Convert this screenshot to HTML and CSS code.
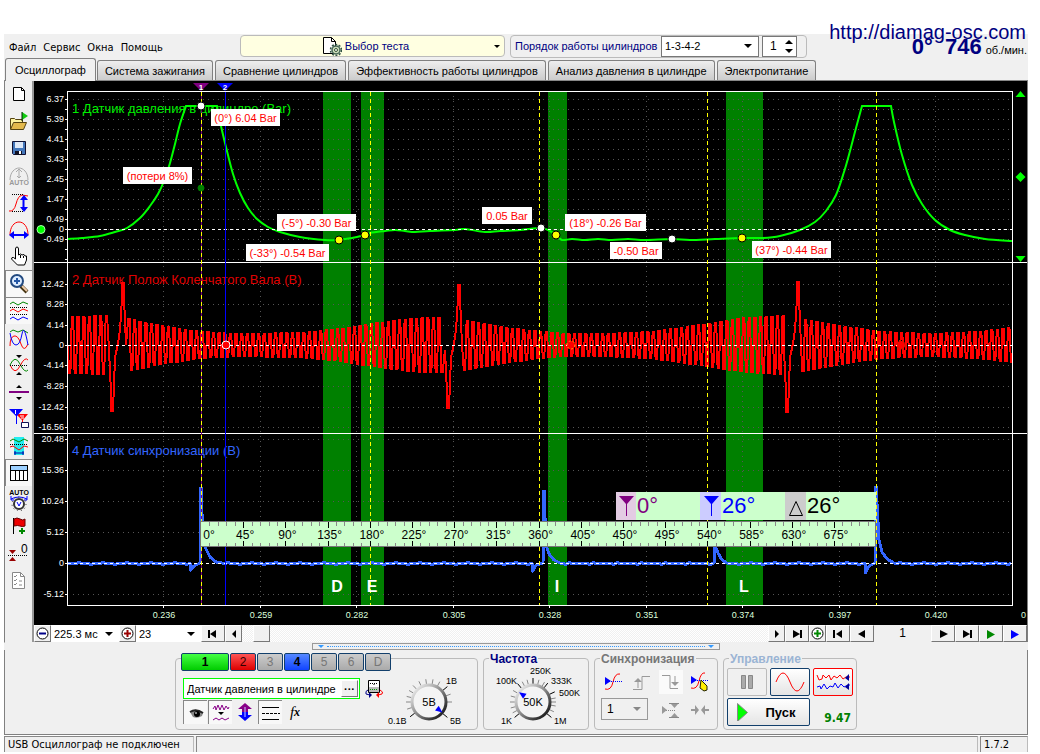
FILE: index.html
```html
<!DOCTYPE html>
<html lang="ru">
<head>
<meta charset="utf-8">
<title>USB Осциллограф</title>
<link rel="stylesheet" href="styles.css">
</head>
<body>
<div class="app">
  <header class="top">
    <nav class="menu">
      <button>Файл</button><button>Сервис</button><button>Окна</button><button>Помощь</button>
    </nav>
    <button class="test-pick">
      <svg width="20" height="20" viewBox="0 0 20 20"><path d="M1.500 1.500h8l4 4v12h-12z" fill="#fff" stroke="#000"/><path d="M9.500 1.500v4h4" fill="none" stroke="#000"/><circle cx="14" cy="14" r="4" fill="#cdb" stroke="#465" stroke-width="1.500"/><circle cx="14" cy="14" r="5.500" fill="none" stroke="#354" stroke-width="1.500" stroke-dasharray="2 1.500"/><circle cx="14" cy="14" r="1.500" fill="#fff" stroke="#353"/></svg>
      <span>Выбор теста</span><i class="caret"></i>
    </button>
    <div class="order">
      <label for="order">Порядок работы цилиндров</label>
      <span class="pick"><select id="order"><option>1-3-4-2</option></select><i class="caret big"></i></span>
      <span class="spin"><input aria-label="Цилиндр" value="1"><svg width="10" height="15" viewBox="0 0 10 15"><path d="M5 1l4 4H1zM5 14l4-4H1z"/></svg></span>
    </div>
    <div class="readout">
      <a class="site" href="#">http://diamag-osc.com</a>
      <div class="rpm"><b>0°</b><b>746</b><span>об./мин.</span></div>
    </div>
  </header>

  <div class="tabs" role="tablist">
    <button role="tab" class="tab on">Осциллограф</button>
    <button role="tab" class="tab">Система зажигания</button>
    <button role="tab" class="tab">Сравнение цилиндров</button>
    <button role="tab" class="tab">Эффективность работы цилиндров</button>
    <button role="tab" class="tab">Анализ давления в цилиндре</button>
    <button role="tab" class="tab">Электропитание</button>
  </div>

  <main class="work">
    <aside class="tools">
      <button aria-label="Новый"><svg viewBox="0 0 22 22"><path d="M5.500 3.500h8l3 3v10h-11z" fill="#fff" stroke="#000"/><path d="M13.500 3.500v3h3" fill="none" stroke="#000"/></svg></button>
      <button aria-label="Открыть"><svg viewBox="0 0 22 22"><path d="M2.500 18V7.500h4l1 1h7v3" fill="#fdf3a0" stroke="#541"/><path d="M2.500 18.500l3-7h13l-3 7z" fill="#e3b94d" stroke="#541"/><path d="M14 1l6 4-6 4z" fill="#1c1"/><path d="M14 1v9" stroke="#020"/></svg></button>
      <button aria-label="Сохранить"><svg viewBox="0 0 22 22"><path d="M4.500 3.500h13v13h-12l-1-1z" fill="#47b" stroke="#113"/><path d="M7 4h8v6H7z" fill="#dde8f8"/><path d="M7 13h7v4H7z" fill="#112"/><path d="M11 13h2v3h-2z" fill="#fff"/></svg></button>
      <button aria-label="Авто"><svg viewBox="0 0 22 22"><path d="M2 15c0-8 5-12 9-12s9 4 9 12M11 5v8M8 7l3-3 3 3M9 11l2 2 2-2" fill="none" stroke="#aaa"/><text x="11" y="20" class="t-auto" fill="#999">AUTO</text></svg></button>
      <button aria-label="Масштаб по амплитуде"><svg viewBox="0 0 22 22"><path d="M1 19q5 1 7-7t6-9l6 1" fill="none" stroke="#f00"/><path d="M4 2.500h12M4 19.500h12" stroke="#000" stroke-dasharray="1 1"/><path d="M15.500 5v13" stroke="#00f" stroke-width="2"/><path d="M12 8l4-5 4 5zM12 15l4 5 4-5z" fill="#00f"/></svg></button>
      <button aria-label="Масштаб по времени"><svg viewBox="0 0 22 22"><path d="M2 16c0-8 4-13 9-13s9 5 9 13" fill="none" stroke="#f00"/><path d="M3 16h16" stroke="#00f" stroke-width="2"/><path d="M1 16l5-4v8zM21 16l-5-4v8z" fill="#00f"/></svg></button>
      <button aria-label="Рука"><svg viewBox="0 0 22 22"><path d="M7.500 13V3q0-2 1.500-2t1.500 2v6l2-1 1.500 1 2-.5 1 1.500 1.500 0V14l-2 5h-7l-6-6q0-2 2-1.500z" fill="#fff" stroke="#000"/><path d="M12.500 9v3M15.500 10v2" stroke="#000"/></svg></button>
      <button class="on" aria-label="Лупа"><svg viewBox="0 0 22 22"><path d="M13 13l6 6" stroke="#431" stroke-width="4"/><path d="M14 13l5 5" stroke="#eca" stroke-width="2"/><circle cx="9" cy="8" r="6" fill="#dcecff" stroke="#234a80" stroke-width="2"/><path d="M9 5v6M6 8h6" stroke="#2457a5" stroke-width="2"/></svg></button>
      <button class="on" aria-label="Раздельно"><svg viewBox="0 0 22 22"><g fill="none"><path d="M2 4l3-2 5 3 5-3 5 2" stroke="#080"/><path d="M2 11l3-2 5 3 5-3 5 2" stroke="#f00"/><path d="M2 19l3-2 5 3 5-3 5 2" stroke="#00f"/><path d="M2 7.500h18M2 14.500h18" stroke="#000" stroke-dasharray="1 1"/></g></svg></button>
      <button aria-label="Вместе"><svg viewBox="0 0 22 22"><g fill="none"><path d="M2 5l3-2 5 2 5-2 5 3" stroke="#080"/><path d="M2 19q0-9 4-10t7 8 7 0" stroke="#f00"/><path d="M2 6q2 12 6 12t6-11 6 11" stroke="#00f"/></g></svg></button>
      <button aria-label="Центр"><svg viewBox="0 0 22 22"><g fill="none"><path d="M2 11q5-11 10-1t8 6" stroke="#080"/><path d="M2 11q5 11 10 1t8-6" stroke="#f00"/><path d="M2 11.500h18" stroke="#000" stroke-dasharray="1 1"/></g><path d="M8 1h6l-3 3zM8 21h6l-3-3z"/></svg></button>
      <button aria-label="Линия"><svg viewBox="0 0 22 22"><path d="M1 11h20" stroke="#800080" stroke-width="2"/><path d="M8 7h6l-3-3zM8 16h6l-3 3z"/></svg></button>
      <button aria-label="Маркеры"><svg viewBox="0 0 22 22"><path d="M8 6h12l-5 6v6h-1v-6z" fill="#f00"/><path d="M1 1h14L9 8v8H8V8z" fill="#00f"/><path d="M7.500 2v4M12 8h4M13 10h3" stroke="#fff"/><path d="M13.500 14.500h7v5h-7z" fill="#fff" stroke="#115"/></svg></button>
      <button aria-label="Интервал"><svg viewBox="0 0 22 22"><path d="M6 2h10v18H6z" fill="#2ee"/><g fill="none"><path d="M2 6l3-2 6 3 5-3 4 2" stroke="#080"/><path d="M2 12l3-1 6 4 5-4 4 1" stroke="#f00"/><path d="M2 9.500h18" stroke="#000" stroke-dasharray="1 1"/><path d="M6 18h10M7 16v4M15 16v4" stroke="#00a"/></g></svg></button>
      <button class="on" aria-label="Таблица"><svg viewBox="0 0 22 22"><path d="M2 4h18v4H2z" fill="#9cd0ff"/><path d="M2 8h18v10H2z" fill="#fff"/><path d="M2.500 4v14M7.500 8v10M11.500 8v10M15.500 8v10M19.500 4v14M2 3.500h18M2 8.500h18M2 18.500h18" stroke="#000"/></svg></button>
      <button aria-label="Авто напряжение"><svg viewBox="0 0 22 22"><text x="11" y="6" class="t-auto">AUTO</text><path d="M3 10q8-4 16 0M3 7v4h3M19 7v4h-3" fill="none" stroke="#00f"/><circle cx="11" cy="15" r="5" fill="#fff" stroke="#333" stroke-width="2"/><circle cx="11" cy="15" r="7" fill="none" stroke="#333" stroke-dasharray="1 3"/><path d="M9 13l2 4 2-4" fill="none" stroke="#00f"/></svg></button>
      <button aria-label="Флаг"><svg viewBox="0 0 22 22"><path d="M5.500 2v16" stroke="#000"/><path d="M6 3q3-2 6 0t5 0v7q-3 1-5 0t-6 0z" fill="#e00" stroke="#600"/><path d="M14 12v6M11 15h6" stroke="#080" stroke-width="2"/></svg></button>
      <button aria-label="Ноль"><svg viewBox="0 0 22 22"><path d="M1 7h7l-3.500 4zM1 18h7l-3.500-4z" fill="#900"/><path d="M0 12.500h20" stroke="#000" stroke-dasharray="1 1"/><text x="13" y="10" class="t-zero">0</text></svg></button>
      <button aria-label="Список"><svg viewBox="0 0 22 22"><path d="M4.500 2.500h8l4 4v12h-12z" fill="#fff" stroke="#888"/><path d="M12.500 2.500v4h4M6 6l1 1 2-2M6 10l1 1 2-2M6 14l1 1 2-2M11 11h3M11 15h3" fill="none" stroke="#888"/></svg></button>
    </aside>

    <section class="scope">
      <svg id="screen" class="screen" viewBox="34 81 993 544">
        <rect x="34" y="81" width="993" height="544"/>
        <g id="bands" fill="#008000"></g>
        <g id="grid" class="grid"></g>
        <g class="name">
          <text x="72" y="113" fill="#00f000">1 Датчик давления в цилиндре (Bar)</text>
          <text x="72" y="284" fill="#e00000">2 Датчик Полож Коленчатого Вала (В)</text>
          <text x="72" y="455" fill="#3366ff">4 Датчик синхронизации (В)</text>
        </g>
        <path id="pressure" fill="none" stroke="#00ff00" stroke-width="2"/>
        <path id="crank" fill="none" stroke="#ff0000" stroke-width="2" shape-rendering="crispEdges"/>
        <path id="sync" fill="none" stroke="#3366ff" stroke-width="3" stroke-linejoin="bevel" shape-rendering="crispEdges"/>
        <g id="lines"></g>
        <g id="axis" class="axis"></g>
        <g id="marks"></g>
        <g id="callouts" class="callout"></g>
        <g id="ruler"></g>
      </svg>
      <div class="timebar">
        <button class="sq" aria-label="Уменьшить"><svg width="13" height="13" viewBox="0 0 13 13"><circle cx="6.500" cy="6.500" r="5.500" fill="#fff" stroke="#000"/><path d="M3 6.500h7" stroke="#008" stroke-width="2"/></svg></button>
        <span class="pick flat"><select aria-label="Длительность"><option>225.3 мс</option></select><i class="caret big"></i></span>
        <button class="sq" aria-label="Увеличить"><svg width="13" height="13" viewBox="0 0 13 13"><circle cx="6.500" cy="6.500" r="5.500" fill="#fff" stroke="#000"/><path d="M3 6.500h7M6.500 3v7" stroke="#900" stroke-width="2"/></svg></button>
        <span class="pick flat wide"><select aria-label="Деление"><option>23</option></select><i class="caret big"></i></span>
        <button class="nav" aria-label="В начало"><svg viewBox="0 0 14 10"><path d="M2 1h2v8H2zM10 1v8L4 5z"/></svg></button>
        <button class="sq" aria-label="Влево"><svg viewBox="0 0 14 10"><path d="M9 1v8L5 5z"/></svg></button>
        <div class="track"><button class="thumb" aria-label="Прокрутка"></button></div>
        <button class="sq" aria-label="Вправо"><svg viewBox="0 0 14 10"><path d="M5 1v8l4-4z"/></svg></button>
        <button class="nav" aria-label="В конец"><svg viewBox="0 0 14 10"><path d="M10 1h2v8h-2zM3 1v8l7-4z"/></svg></button>
        <button class="sq" aria-label="Добавить"><svg width="13" height="13" viewBox="0 0 13 13"><circle cx="6.500" cy="6.500" r="5.500" fill="#fff" stroke="#000"/><path d="M3 6.500h7M6.500 3v7" stroke="#080" stroke-width="2"/></svg></button>
        <button class="nav" aria-label="Первый"><svg viewBox="0 0 14 10"><path d="M2 1h2v8H2zM11 1v8L5 5z"/></svg></button>
        <button class="nav" aria-label="Предыдущий"><svg viewBox="0 0 14 10"><path d="M10 1v8L3 5z"/></svg></button>
        <output class="page">1</output>
        <button class="nav" aria-label="Следующий"><svg viewBox="0 0 14 10"><path d="M4 1v8l8-4z"/></svg></button>
        <button class="nav" aria-label="Последний"><svg viewBox="0 0 14 10"><path d="M10 1h2v8h-2zM3 1v8l7-4z"/></svg></button>
        <button class="nav" aria-label="Воспроизвести"><svg viewBox="0 0 14 10"><path d="M3 1v9l8-4.500z" fill="#080"/></svg></button>
        <button class="nav" aria-label="Воспроизвести всё"><svg viewBox="0 0 14 10"><path d="M3 1v9l8-4.500z" fill="#00f"/></svg></button>
      </div>
    </section>
  </main>

  <div class="splitter"><i></i><span></span><i></i></div>

  <div class="panels">
    <section class="group channels">
      <div class="chan-left">
        <div class="chan-row">
          <button class="ch c1">1</button><button class="ch c2">2</button><button class="ch">3</button><button class="ch c4">4</button><button class="ch">5</button><button class="ch">6</button><button class="ch">D</button>
        </div>
        <div class="sensor-row">
          <div class="sensor"><input aria-label="Датчик" value="Датчик давления в цилиндре"><button aria-label="Выбрать датчик">···</button></div>
          <button class="bare" aria-label="Прибор"><svg width="20" height="20" viewBox="0 0 20 20"><path d="M4.500 1.500h11v12h-11z" fill="#fff" stroke="#000"/><path d="M5 8h10v5H5z" fill="#bbb"/><path d="M6 10.500h8" stroke="#090" stroke-dasharray="1 1"/><path d="M6 4.500h8M10 5v2" stroke="#000" stroke-dasharray="1 1"/><path d="M4 11q-3 1-2 4l4 1" fill="none" stroke="#008"/><path d="M5 13v6l3-3z" fill="#008"/><path d="M16 11q4 2 2 4l-4 1" fill="none" stroke="#f00"/><path d="M15 13v6l-3-3z" fill="#f00"/></svg></button>
        </div>
        <div class="mini-row">
          <button class="mini on" aria-label="Показать"><svg width="20" height="20" viewBox="0 0 20 20"><path d="M4 9q6-5 13 1l-1 3q-5 3-9 1z" fill="#888"/><path d="M4 9q6-4 13 1" stroke="#222" stroke-width="2" fill="none"/><circle cx="11" cy="11" r="3"/><path d="M9 10h2" stroke="#fff"/></svg></button>
          <button class="mini on" aria-label="Фильтр"><svg width="20" height="20" viewBox="0 0 20 20"><path d="M2 6l2-3 1 4 2-5 2 5 2-5 2 5 2-4 2 3 1-2M2 17l3-2 3 2 3-2 3 2 4-2" fill="none" stroke="#808"/><path d="M7 9h6l-3 3z"/></svg></button>
          <button class="mini" aria-label="Сдвиг"><svg width="20" height="20" viewBox="0 0 20 20"><path d="M10 1l7 6h-4v3H7V7H3z" fill="#808"/><path d="M10 19l7-6h-4v-3H7v3H3z" fill="#00f"/><path d="M10 5v10" stroke="#ccf"/></svg></button>
          <button class="mini on" aria-label="Линии"><svg width="20" height="20" viewBox="0 0 20 20"><path d="M1 4.500h17M1 16.500h17" stroke="#000"/><path d="M1 10.500h18" stroke="#000" stroke-dasharray="3 1"/></svg></button>
          <button class="mini fx" aria-label="Функция"><i>f</i><b>x</b></button>
        </div>
      </div>
      <svg class="knob" id="knobV" width="92" height="66" viewBox="382 668 92 66"></svg>
    </section>

    <section class="group freq"><h2>Частота</h2>
      <svg class="knob" id="knobF" width="96" height="66" viewBox="488 664 96 66"></svg>
    </section>

    <section class="group sync"><h2>Синхронизация</h2>
      <div class="sync-grid">
        <button class="bare" aria-label="Уровень"><svg width="20" height="20" viewBox="0 0 20 20"><path d="M2 17q6 2 8-7t7-8" fill="none" stroke="#f00"/><path d="M2 9.500h17" stroke="#00f" stroke-dasharray="1 1"/><path d="M2 5l6 4-6 4z" fill="#00f"/></svg></button>
        <button class="bare" aria-label="Фронт"><svg width="20" height="20" viewBox="0 0 20 20"><path d="M1 17.500h9v-13h8M6 16V9" fill="none" stroke="#999"/><path d="M2 10h8L6 6z" fill="#999"/></svg></button>
        <button class="bare hatch" aria-label="Спад"><svg width="20" height="20" viewBox="0 0 20 20"><path d="M1 3.500h8v13h8M14 4v7" fill="none" stroke="#999"/><path d="M10 10h8l-4 4z" fill="#999"/></svg></button>
        <button class="bare" aria-label="Вручную"><svg width="20" height="20" viewBox="0 0 20 20"><path d="M1 16q6 2 8-7t6-8" fill="none" stroke="#f00"/><path d="M1 8.500h18" stroke="#00f" stroke-dasharray="1 1"/><path d="M1 4l6 4-6 4z" fill="#00f"/><path d="M11 8l6 6v4l-3 1-4-3z" fill="#fe0" stroke="#220"/></svg></button>
        <span class="pick gray"><select aria-label="Канал синхронизации"><option>1</option></select><i class="caret big"></i></span>
        <button class="bare" aria-label="Диапазон"><svg width="20" height="20" viewBox="0 0 20 20"><path d="M8 3.500h10M8 17.500h10" stroke="#888"/><path d="M1 10.500h14" stroke="#888" stroke-dasharray="1 1"/><path d="M10 4h7l-3.500 4zM10 17h7l-3.500-4zM1 6l5 4-5 4z" fill="#999"/></svg></button>
        <button class="bare" aria-label="Свести"><svg width="20" height="20" viewBox="0 0 20 20"><path d="M1 9h4V5l4 5-4 5v-4H1zM19 9h-4V5l-4 5 4 5v-4h4z" fill="#999"/></svg></button>
      </div>
    </section>

    <section class="group control"><h2>Управление</h2>
      <div class="run-grid">
        <button class="run dis" aria-label="Пауза"><svg width="30" height="20" viewBox="0 0 30 20"><path d="M9.500 3.500h4v13h-4zM16.500 3.500h4v13h-4z" fill="#aaa" stroke="#888"/></svg></button>
        <button class="run" aria-label="Синус"><svg width="30" height="20" viewBox="0 0 30 20"><path d="M1 10Q8-8 15 10t14 0" fill="none" stroke="#f00"/></svg></button>
        <button class="run red" aria-label="Запись"><svg width="34" height="20" viewBox="0 0 34 20"><path d="M1 3l2 5 3-1 1-4 3 3 3-3 2 5 3-4 3 2 3-3 3 4 3-2h4" fill="none" stroke="#f00"/><path d="M1 15l3-1 1 3 3-5 3 5 3-3 3 1 2-4 3 5 3-4 3 3 4-2h2" fill="none" stroke="#00f"/><path d="M33 2v7l-4-3zM33 11v7l-4-3z" fill="#009"/></svg></button>
        <button class="run start"><svg width="14" height="18" viewBox="0 0 14 18"><path d="M1.500.5l10 9-10 9z" fill="#0f0" stroke="#888"/></svg><span>Пуск</span></button>
        <output>9.47</output>
      </div>
    </section>
  </div>

  <footer class="status"><span>USB Осциллограф не подключен</span><span></span><span>1.7.2</span></footer>
</div>
<script src="app.js"></script>
</body>
</html>
```

FILE: app.js
```js
const NS = 'http://www.w3.org/2000/svg';
const $ = id => document.getElementById(id);
function add(parent, tag, attrs, text) {
  const el = document.createElementNS(NS, tag);
  for (const k in attrs) el.setAttribute(k, attrs[k]);
  if (text !== undefined) el.textContent = text;
  parent.appendChild(el);
  return el;
}
const line = (p, d, cls) => add(p, 'path', { d, class: cls });

/* stroke phases */
[[323, 28], [361, 23], [548, 19], [726, 37]].forEach(([x, w]) =>
  add($('bands'), 'rect', { x, y: 92, width: w, height: 513 }));

/* grid */
const rows1 = []; for (let y = 99; y < 260; y += 10) rows1.push(y);
const rows2 = [284, 304, 325, 365, 386, 407, 427];
const rows3 = [439, 470, 501, 532, 594];
const cols = [163, 260, 356, 453, 549, 646, 742, 839, 935];
[...rows1, ...rows2, ...rows3].forEach(y => line($('grid'), `M73 ${y}.5H1011`));
cols.forEach(x => line($('grid'), `M${x}.5 96V604`));

/* smooth curve through points */
function curve(p) {
  let d = `M${p[0]}`;
  for (let i = 0; i < p.length - 1; i++) {
    const a = p[i - 1] || p[i], b = p[i], c = p[i + 1], e = p[i + 2] || c;
    d += `C${b[0] + (c[0] - a[0]) / 6} ${b[1] + (c[1] - a[1]) / 6} ${c[0] - (e[0] - b[0]) / 6} ${c[1] - (e[1] - b[1]) / 6} ${c[0]} ${c[1]}`;
  }
  return d;
}
const up1 = [[68, 239], [82, 238], [100, 236], [115, 232], [127, 228], [140, 218], [150, 206], [158, 194], [164, 181], [170, 163], [175, 144], [180, 124], [186, 106]];
const mid = [[217, 106], [221, 126], [226, 147], [233, 174], [240, 193], [248, 208], [257, 219], [268, 227], [280, 232], [300, 237], [325, 240], [339, 240], [352, 238], [361, 236], [370, 233], [385, 231], [395, 230], [405, 231], [415, 232], [430, 231], [455, 230], [465, 229], [485, 232], [500, 231], [520, 230], [541, 228], [550, 231], [556, 235], [562, 240], [572, 239], [585, 240], [598, 239], [612, 240], [628, 239], [645, 240], [672, 239], [690, 240], [715, 239], [742, 238], [763, 238], [780, 236], [800, 230], [815, 222], [826, 211], [836, 195], [844, 172], [850, 151], [856, 128], [862, 106]];
const end = [[891, 106], [894, 122], [902, 155], [912, 185], [922, 204], [935, 220], [950, 230], [965, 235], [985, 239], [1012, 241]];
$('pressure').setAttribute('d', curve(up1) + curve(mid).replace('M', 'L') + curve(end).replace('M', 'L'));

/* crankshaft sensor: carrier with an amplitude envelope and missing-tooth pulses */
const env = [[68, 29], [108, 30], [128, 27], [160, 20], [200, 14], [235, 12], [300, 13], [340, 17], [385, 24], [420, 28], [445, 28], [464, 26], [500, 19], [540, 14], [565, 12], [600, 12], [650, 14], [700, 21], [745, 28], [783, 30], [802, 27], [840, 20], [880, 14], [930, 12], [975, 14], [1012, 18]];
function amp(x) {
  for (let i = 1; i < env.length; i++) if (x <= env[i][0]) {
    const [a, b] = env[i - 1], [c, d] = env[i];
    return b + (d - b) * (x - a) / (c - a);
  }
  return 16;
}
const pulses = [[112, 411, 283], [448, 408, 285], [787, 412, 282]];
let d = 'M68 345';
for (let x = 69, s = 1; x < 1011; x += 2.82, s = -s) {
  if (pulses.some(p => x > p[0] - 4 && x < p[0] + 15)) continue;
  const y = 345 + s * (amp(x) - 1);
  d += `L${x.toFixed(1)} ${y.toFixed(1)}h1.4`;
  const p = pulses.find(q => x <= q[0] - 4 && x + 2.82 > q[0] - 4);
  if (p) d += `L${p[0] - 3} 350L${p[0] - 1} 392V${p[1]}H${p[0] + 1}L${p[0] + 3} 358L${p[0] + 6} 343L${p[0] + 8} 330L${p[0] + 10} 298V${p[2]}H${p[0] + 12}V298L${p[0] + 14} 345`;
}
$('crank').setAttribute('d', d);

/* synchronisation sensor */
const hits = [
  { x0: 188, pts: [[190, 563], [190, 571], [194, 566], [200, 563], [201, 487], [203, 540], [206, 549], [210, 557], [216, 562], [222, 563]] },
  { x0: 530, pts: [[532, 563], [532, 572], [536, 565], [543, 563], [544, 490], [546, 545], [549, 554], [554, 560], [560, 563]] },
  { x0: 712, pts: [[714, 563], [715, 546], [718, 553], [722, 560], [727, 563]] },
  { x0: 862, pts: [[865, 563], [865, 574], [869, 566], [875, 563], [876, 486], [879, 540], [882, 552], [887, 559], [894, 563]] }
];
d = 'M68 563.5';
let h = 0;
for (let x = 70; x < 1012; x += 3) {
  if (hits[h] && x >= hits[h].x0) {
    hits[h].pts.forEach(p => { d += `L${p}`; });
    x = hits[h].pts[hits[h].pts.length - 1][0];
    h++;
    continue;
  }
  const n = (x * 7 + (x >> 3)) % 9;
  d += `L${x} ${563.5 + (n === 0 ? 1 : n === 4 ? -1 : 0)}`;
}
$('sync').setAttribute('d', d);

/* frame, zero lines, cursors */
const L = $('lines');
line(L, 'M67.500 91.500H1012.500V605.500H67.500zM34 262.500H1027M34 433.500H1027', 'frame');
[229, 345, 563].forEach(y => line(L, `M68 ${y}.5H1012`, 'zero'));
line(L, 'M201.500 92V605', 'cur1');
[201, 370, 539, 707, 876].forEach(x => line(L, `M${x}.5 92V605`, 'cycle'));
line(L, 'M225.500 92V605', 'cur2');

/* scales */
const A = $('axis');
const scale = (items, ticks) => {
  items.forEach(([y, t]) => add(A, 'text', { x: 64, y: y + 3, 'text-anchor': 'end' }, t));
  ticks.forEach(y => line(A, `M65 ${y}.5H68`, 'frame'));
};
scale([[99, '6.37'], [119, '5.39'], [139, '4.41'], [159, '3.43'], [179, '2.45'], [199, '1.47'], [219, '0.49'], [229, '0'], [239, '-0.49']], rows1);
scale([[284, '12.42'], [304, '8.28'], [325, '4.14'], [345, '0'], [365, '-4.14'], [386, '-8.28'], [407, '-12.42'], [427, '-16.56']], [...rows2, 345]);
scale([[439, '20.48'], [470, '15.36'], [501, '10.24'], [532, '5.12'], [563, '0'], [594, '-5.12']], [...rows3, 563]);
['0.236', '0.259', '0.282', '0.305', '0.328', '0.351', '0.374', '0.397', '0.420'].forEach((t, i) => {
  add(A, 'text', { x: cols[i] + 1, y: 618, 'text-anchor': 'middle', class: 'time' }, t);
  line(A, `M${cols[i]}.5 606v2`, 'frame');
});
add(A, 'text', { x: 1021, y: 618, class: 'time' }, '0');

/* markers */
const M = $('marks');
const dot = (cx, cy, fill, stroke = '#000', r = 4) => add(M, 'circle', { cx, cy, r, fill, stroke });
dot(41, 229.5, '#00ff00', '#afa');
dot(201, 188, '#008000', '#008000', 3);
dot(201, 106, '#fff'); dot(541, 228, '#fff'); dot(672, 239, '#fff');
[[339, 240], [365, 235], [556, 235], [742, 238]].forEach(p => dot(p[0], p[1], '#ffff00'));
dot(226, 345, '#f00', '#fff');
dot(571, 345, '#f00', '#fa0').setAttribute('stroke-dasharray', '2 2');
dot(901, 345, '#f00', '#a30').setAttribute('stroke-dasharray', '2 2');
add(M, 'path', { d: 'M1020.500 91l5 6h-10zM1020.500 172l5 5-5 5-5-5zM1020.500 262l5-6h-10z', fill: '#00ff00' });
add(M, 'path', { d: 'M193 83h16l-8 8z', fill: '#800080' });
add(M, 'path', { d: 'M217 83h16l-8 8z', fill: '#0000ff' });
add(M, 'text', { x: 201, y: 90, class: 'flag' }, '1');
add(M, 'text', { x: 225, y: 90, class: 'flag' }, '2');
[[337, 'D'], [372, 'E'], [557, 'I'], [744, 'L']].forEach(([x, t]) => add(M, 'text', { x, y: 592, class: 'phase' }, t));

/* call-outs */
[[211, 109, 69, '(0°) 6.04 Bar'], [123, 167, 69, '(потери 8%)'], [277, 214, 79, '(-5°) -0.30 Bar'], [246, 244, 83, '(-33°) -0.54 Bar'],
 [482, 207, 50, '0.05 Bar'], [565, 214, 81, '(18°) -0.26 Bar'], [610, 242, 52, '-0.50 Bar'], [752, 241, 79, '(37°) -0.44 Bar']].forEach(([x, y, w, t]) => {
  add($('callouts'), 'rect', { x, y, width: w, height: 17 });
  add($('callouts'), 'text', { x: x + w / 2, y: y + 13 }, t);
});

/* angle ruler */
const R = $('ruler');
add(R, 'rect', { x: 200.5, y: 521.5, width: 675, height: 25, class: 'tape' });
for (let i = 1; i < 80; i++) {
  const x = Math.round(201 + i * 8.44), big = i % 5 === 0, n = big ? 6 : 4;
  line(R, `M${x}.5 522v${n}M${x}.5 546v-${n - 1}`, big ? 'big' : 'small');
}
for (let i = 0; i < 16; i++) {
  add(R, 'text', { x: i ? 203 + i * 42.2 : 209, y: 539, class: 'deg' }, i * 45 + '°');
}
add(R, 'rect', { x: 616, y: 492, width: 260, height: 28, fill: '#ccffcc' });
[[616, 20, '#e3cce3'], [700, 21, '#ccccff'], [785, 21, '#cccccc']].forEach(([x, w, f]) => add(R, 'rect', { x, y: 492, width: w, height: 28, fill: f }));
add(R, 'path', { d: 'M619 496h15l-7 8v12h-1v-12z', fill: '#800080' });
add(R, 'path', { d: 'M704 496h15l-7 8v12h-1v-12z', fill: '#0000ff' });
add(R, 'path', { d: 'M789.500 515.500h13l-6.500-14z', fill: 'none', stroke: '#000' });
[[637, '0°', '#800080'], [722, '26°', '#0000ff'], [807, '26°', '#000']].forEach(([x, t, fill]) => add(R, 'text', { x, y: 513, class: 'angle', fill }, t));

/* rotary knobs */
function knob(svg, cx, cy, value, minor, major, pointer) {
  const defs = add(svg, 'defs', {});
  const g = add(defs, 'linearGradient', { id: svg.id + 'g', x1: 0, y1: 0, x2: 1, y2: 1 });
  add(g, 'stop', { offset: 0, 'stop-color': '#fff' });
  add(g, 'stop', { offset: 0.5, 'stop-color': '#888' });
  add(g, 'stop', { offset: 1, 'stop-color': '#000' });
  const ray = (a, r1, r2, stroke) => {
    const c = Math.cos(a * Math.PI / 180), s = -Math.sin(a * Math.PI / 180);
    add(svg, 'path', { d: `M${cx + c * r1} ${cy + s * r1}L${cx + c * r2} ${cy + s * r2}`, stroke });
  };
  minor.forEach(a => ray(a, 18, 23, '#888'));
  major.forEach(a => ray(a, 18, 24, '#000'));
  add(svg, 'circle', { cx, cy, r: 17, fill: '#f4f4f4', stroke: `url(#${svg.id}g)`, 'stroke-width': 3 });
  add(svg, 'text', { x: cx, y: cy + 4, class: 'kval' }, value);
  add(svg, 'path', { d: 'M-3 -3L4 0L-3 3z', fill: '#00f', transform: `translate(${cx + 13 * Math.cos(pointer * Math.PI / 180)} ${cy - 13 * Math.sin(pointer * Math.PI / 180)}) rotate(${-pointer})` });
}
knob($('knobV'), 430, 702, '5В', [0, 20, 62, 80, 98, 116, 134, 150, 166, 180, 198], [40, -40, 218], -38);
[[447, 684, '1В'], [451, 724, '5В'], [389, 724, '0.1В']].forEach(([x, y, t]) => add($('knobV'), 'text', { x, y, class: 'klab' }, t));
knob($('knobF'), 533, 702, '50K', [0, 10, -10, -25, 60, 75, 105, 118, 150, 165, 180, 195, 208], [90, 52, 25, 130, -40, 220], 145);
[[496, 684, '100K'], [530, 674, '250K'], [551, 684, '333K'], [559, 696, '500K'], [501, 724, '1K'], [554, 724, '1M']].forEach(([x, y, t]) => add($('knobF'), 'text', { x, y, class: 'klab' }, t));
```

FILE: styles.css
```css
* { box-sizing: border-box; }
body { margin: 0; background: #fff; font: 11px "Liberation Sans", Arial, sans-serif; color: #000; }
button, input, select { font: inherit; color: inherit; margin: 0; padding: 0; border: 0; background: none; border-radius: 0; }
h2 { margin: 0; }
.app { margin: 34px 12px 0 4px; background: #f0f0f0; }

.top { display: flex; height: 24px; align-items: center; }
.menu { display: flex; gap: 7px; padding: 2px 0 0 5px; width: 236px; font: 11px "DejaVu Sans Condensed", "DejaVu Sans", sans-serif; }
.test-pick { display: flex; align-items: center; justify-content: center; gap: 3px; flex: 0 1 265px; height: 22px; background: #ffffe1; border: 1px solid #bbb; border-radius: 4px; color: #000080; position: relative; padding-right: 14px; }
.test-pick .caret { position: absolute; right: 4px; }
.caret { border: 3px solid transparent; border-top-color: #000; border-bottom: 0; width: 0; height: 0; }
.caret.big { border-width: 4px 4px 0; }
.order { display: flex; align-items: center; gap: 3px; margin-left: 5px; padding: 0 9px 0 4px; height: 23px; border: 1px solid #bbb; border-radius: 4px; color: #000080; }
.order label { width: 143px; white-space: nowrap; }
.pick { position: relative; display: inline-flex; align-items: center; background: #fff; color: #000; }
.pick select { appearance: none; width: 100%; height: 100%; padding-left: 3px; }
.pick .caret { position: absolute; right: 6px; pointer-events: none; }
.order .pick { width: 98px; height: 21px; border: 1px solid #777; }
.spin { display: flex; align-items: center; width: 35px; height: 21px; background: #fff; border: 1px solid #777; color: #000; }
.spin input { width: 21px; padding-left: 7px; font-size: 12px; }
.readout { margin-left: auto; display: flex; flex-direction: column; align-items: flex-end; margin-top: -18px; color: #000080; }
.site { font-size: 20px; line-height: 20px; color: inherit; text-decoration: none; padding-right: 2px; }
.rpm { display: flex; align-items: baseline; gap: 4px; height: 10px; line-height: 10px; font-size: 22px; }
.rpm b + b { margin-left: 8px; }
.rpm span { font-size: 11px; color: #000; padding-right: 1px; }

.tabs { display: flex; align-items: flex-end; gap: 2px; height: 23px; border-bottom: 1px solid #888; padding-left: 1px; }
.tab { height: 20px; padding: 0 7px; border: 1px solid #808080; border-bottom: 0; border-radius: 3px 3px 0 0; background: linear-gradient(#eee, #ccc); white-space: nowrap; }
.tab.on { height: 23px; margin: 0 -1px -1px 0; padding: 0 9px; background: #f0f0f0; }

.work { display: flex; border-left: 1px solid #808080; border-bottom: 1px solid #f0f0f0; }
.tools { flex: 0 0 29px; display: flex; flex-direction: column; border-right: 2px solid #999; }
.tools button { height: 27px; display: flex; align-items: center; justify-content: center; }
.tools svg { width: 22px; height: 22px; }
.tools .on, .mini.on { background: #f8f8f8; border-top: 1px solid #888; border-left: 1px solid #888; }
.t-auto { font: bold 7px "Liberation Sans", sans-serif; text-anchor: middle; }
.t-zero { font: 12px "Liberation Sans", sans-serif; }

.scope { flex: 1; min-width: 0; border-right: 1px solid #808080; }
.screen { display: block; width: 100%; font-family: "Liberation Sans", Arial, sans-serif; }
.grid path { stroke: #555; stroke-dasharray: 1 4; fill: none; shape-rendering: crispEdges; }
.frame { stroke: #fff; fill: none; shape-rendering: crispEdges; }
.zero { stroke: #fff; stroke-dasharray: 3 3; shape-rendering: crispEdges; }
.cycle { stroke: #ffff00; stroke-dasharray: 4 3; shape-rendering: crispEdges; }
.cur1 { stroke: #800080; shape-rendering: crispEdges; }
.cur2 { stroke: #0000ff; shape-rendering: crispEdges; }
.name { font-size: 13px; }
.axis text { font-size: 9px; fill: #fff; }
.axis .time { fill: #dfd; }
.flag { font: bold 8px "Liberation Sans", sans-serif; fill: #fff; text-anchor: middle; }
.phase { font-weight: bold; font-size: 16px; fill: #fff; text-anchor: middle; }
.callout rect { fill: #fff; stroke: none; }
.callout text { font-size: 11px; fill: #f00; text-anchor: middle; }
.tape { fill: #ccffcc; stroke: #777; }
.big { stroke: #000; }
.small { stroke: #888; }
.deg { font-size: 12px; text-anchor: middle; }
.angle { font-size: 22px; }

.timebar { display: flex; height: 17px; background: #f0f0f0; }
.timebar button { display: flex; align-items: center; justify-content: center; background: #f0f0f0; border: 1px solid; border-color: #fff #777 #777 #fff; }
.timebar .sq { flex: 0 0 17px; }
.timebar .nav { flex: 0 0 24px; }
.timebar .nav svg, .timebar .sq svg:not([width]) { width: 14px; height: 10px; flex: none; }
.pick.flat { flex: 0 0 68px; }
.pick.flat.wide { flex: 0 0 65px; }
.track { flex: 1; padding-left: 11px; background: repeating-conic-gradient(#fff 0 25%, #f0f0f0 0 50%) 0 0 / 2px 2px; }
.track .thumb { width: 17px; height: 17px; }
.page { flex: 0 0 57px; text-align: center; font-size: 12px; line-height: 17px; }

.splitter { display: flex; align-items: center; justify-content: space-between; width: 408px; height: 7px; margin-left: 308px; border: 1px solid #999; padding: 0 5px; }
.splitter i { border: 3px solid transparent; border-top-color: #39f; border-bottom: 0; }
.splitter span { flex: 1; border-top: 1px dotted #39f; margin: 0 3px; }

.panels { display: flex; gap: 5px; padding: 8px 0 4px 170px; border-left: 1px solid #808080; border-right: 1px solid #808080; border-bottom: 1px solid #808080; }
.group { position: relative; height: 72px; border: 1px solid #bbb; border-radius: 4px; }
.group h2 { position: absolute; top: -6px; left: 5px; background: #f0f0f0; padding: 0 1px; font: bold 12px/13px "Liberation Sans", sans-serif; color: #000080; white-space: nowrap; }
.sync h2 { color: #777; }
.control h2 { color: #9bb4d4; }
.channels { width: 303px; display: flex; }
.freq { width: 106px; }
.sync { width: 124px; }
.control { width: 134px; }
.chan-left { margin: -6px 0 0 5px; width: 210px; flex: none; }
.chan-row { display: flex; gap: 1px; background: #f0f0f0; }
.ch { width: 26px; height: 18px; border: 1px solid #123f6b; border-radius: 2px; background: linear-gradient(#ccc, #aaa); color: #777; font-size: 12px; }
.c1 { width: 48px; background: linear-gradient(#4f4, #0c0); color: #000; font-weight: bold; }
.c2 { background: linear-gradient(#f55, #d00); color: #300; }
.c4 { background: linear-gradient(#58f, #14f); color: #000; font-weight: bold; }
.sensor-row { display: flex; align-items: center; gap: 4px; margin: 7px 0 1px 2px; }
.sensor { display: flex; width: 177px; height: 21px; border: 1px solid #00ff00; background: #fff; padding: 1px; }
.sensor input { flex: 1; min-width: 0; padding-left: 2px; }
.sensor button { width: 17px; background: #f0f0f0; border: 1px solid; border-color: #fff #777 #777 #fff; font-weight: bold; line-height: 12px; }
.bare { display: flex; align-items: center; justify-content: center; }
.mini-row { display: flex; gap: 1px; margin-left: 2px; }
.mini { width: 24px; height: 24px; display: flex; align-items: center; justify-content: center; }
.fx { font: 15px "Liberation Serif", serif; }
.fx b { font-size: 12px; font-style: italic; }
.knob { display: block; font-family: "Liberation Sans", sans-serif; flex: none; }
.channels .knob { margin: 9px 0 -6px -10px; }
.freq .knob { margin: 5px 0 0 4px; }
.kval { font-size: 11px; text-anchor: middle; }
.klab { font-size: 9px; }
.sync-grid { display: grid; grid-template-columns: repeat(4, 24px); gap: 5px; padding: 11px 6px 0; row-gap: 4px; }
.sync-grid .bare { height: 24px; }
.hatch { background: #fafafa; }
.pick.gray { grid-column: span 2; width: 47px; height: 22px; border: 1px solid #999; background: #f0f0f0; }
.pick.gray select { padding-left: 5px; font-size: 12px; }
.pick.gray .caret { border-top-color: #888; }
.run-grid { display: grid; grid-template-columns: 40px 40px 40px; gap: 3px; padding: 9px 3px 0; row-gap: 2px; }
.run { height: 28px; border: 1px solid #123f6b; border-radius: 2px; background: linear-gradient(#fff, #e4e4e4); display: flex; align-items: center; justify-content: center; }
.run.dis { border-color: #bbb; background: #f0f0f0; }
.run.red { border-color: #f00; }
.run.start { grid-column: span 2; gap: 16px; padding-right: 6px; font: bold 13px "Liberation Sans", sans-serif; }
.run-grid output { align-self: center; justify-self: end; color: #008000; font: bold 12px "DejaVu Sans Condensed", sans-serif; padding: 12px 2px 0 0; }

.status { display: grid; grid-template-columns: 190px 1fr 48px; gap: 2px; height: 17px; border-top: 1px solid #fff; font: 11px "DejaVu Sans Condensed", "DejaVu Sans", sans-serif; }
.status span { border: 1px solid #bbb; border-top-color: #888; border-left-color: #888; padding-left: 3px; line-height: 15px; white-space: nowrap; }
```
